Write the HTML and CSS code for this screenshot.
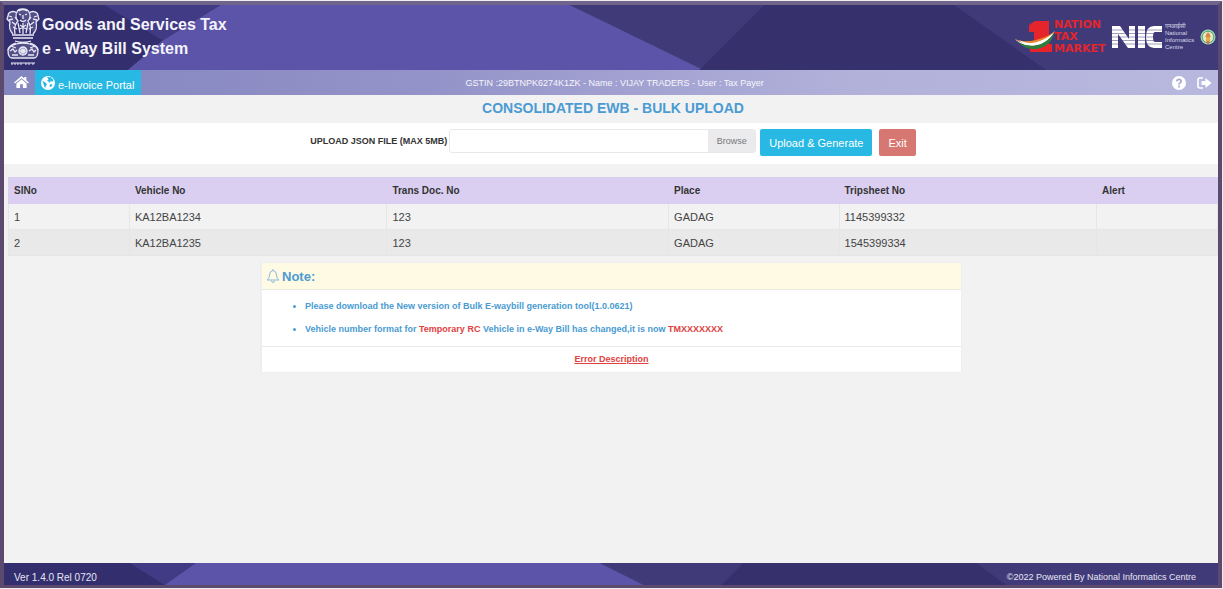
FILE: index.html
```html
<!DOCTYPE html>
<html lang="en">
<head>
  <meta charset="UTF-8" />
  <meta name="viewport" content="width=device-width, initial-scale=1.0" />
  <title>e-Way Bill System</title>
  <link rel="stylesheet" href="styles.css">
</head>
<body>
  <header class="header">
    <div class="brand">
      <svg class="emblem" viewBox="0 0 34 60" fill="#8f8cb8" fill-opacity=".35" stroke="#e9e7f5" stroke-width="1.3">
        <path d="M11 5c1-4 10-4 12 0 2 3 1 7-1 9 2 3 3 8 2 13M11 5c-2 3-1 7 1 9-3 3-4 8-3 13M13 7l2 1M19 8l2-1M17 8v4M14 13q3 3 6 0M13 4q4-3 8 0" />
        <path d="M11 6C7 3 2 5 2 9l-1 3 3 3c-1 4 0 9 3 12M3 9l3 1M3 13l4-1M23 6c4-3 9-1 9 3l1 3-3 3c1 4 0 9-3 12M31 9l-3 1M31 13l-4-1" />
        <path d="M12 16l2 10M22 16l-2 10M17 16v11M14 18l6 4M20 18l-6 4M6 15l4 3M28 15l-4 3M7 20l4 2M27 20l-4 2M9 10l2 3M25 10l-2 3" />
        <path d="M6 28h22M7 31h20M9 34q8 3 16 0M10 36q-7 2-8 7M24 36q7 2 8 7" />
        <path d="M2 43q0 8 4 8h22q4 0 4-8-2-5-8-6-7-2-14 0-6 1-8 6z" />
        <circle cx="17" cy="44" r="4" />
        <path d="M17 40v8M13 44h8M14 41l6 6M20 41l-6 6M4 44l3-2 2 3 2-2M23 44l3-2 2 3 2-2M6 48h6M22 48h6M5 39l5 2M29 39l-5 2" />
        <path d="M5 56h24M6 56v2M9 56v2M12 56v2M15 56v2M20 56v2M23 56v2M27 56v2" stroke-width="1" />
      </svg>
      <h1>Goods and Services Tax<br>e - Way Bill System</h1>
    </div>
    <div class="logos">
      <div class="market">
        <svg class="market-one" viewBox="0 0 44 34">
          <path d="M15 5l6-4h14v23h3v8H16v-8h4V12h-5z" fill="#e5242b" />
          <path d="M1 19q9 6 21 3 12-3 19-11-6 13-20 15-13 1-20-7z" fill="#fff" />
          <path d="M1 19q9 4 21 1 12-3 19-9-7 9-18 12-13 2-22-4z" fill="#ee8a2e" />
          <path d="M4 22q9 5 18 3 12-3 18-12-3 14-18 16-11 1-18-7z" fill="#2d7d3b" />
          <path d="M5 20q9 5 18 2 10-3 16-9-6 10-16 12-11 2-18-5z" fill="#fff" />
        </svg>
        <span>NATION<br>TAX<br>MARKET</span>
      </div>
      <svg class="nic" viewBox="0 0 50 24">
        <path d="M0 1h8l9 13V1h6v22h-7L6 9v14H0zM26 1h7v22h-7zM50 1v6h-7q-2 0-2 5t2 5h7v6h-8q-8 0-8-11t8-11z" fill="#fff" />
        <path d="M0 5h50M0 8.500h50M0 12h50M0 15.500h50M0 19h50" stroke="#403a78" stroke-width=".5" />
      </svg>
      <div class="nic-name"><span lang="hi">एनआईसी</span><br>National<br>Informatics<br>Centre</div>
      <svg class="badge" viewBox="0 0 16 16">
        <circle cx="8" cy="8" r="7.500" fill="#9ed8b4" />
        <circle cx="8" cy="8" r="5.800" fill="#e9e6c3" stroke="#4fa56f" />
        <path d="M6 13V6q0-2 2-2t2 2v7z" fill="#e4ab4c" />
        <path d="M5 8l3-5 3 5z" fill="#d98546" />
        <path d="M7 12h2v3H7z" fill="#ec6d58" />
      </svg>
    </div>
  </header>

  <nav class="navbar">
    <a class="home" href="#" aria-label="Home">
      <svg viewBox="0 0 16 14" width="15" height="13" fill="#fff">
        <path d="M8 0l3 2.600V1h2.200v3.500L16 7l-1 1.200L8 2.300 1 8.200 0 7z" />
        <path d="M8 3.500l5.500 4.700V13H9.500V9h-3v4h-4V8.200z" />
      </svg>
    </a>
    <a class="portal" href="#">
      <svg viewBox="0 0 14 14" width="14" height="14">
        <circle cx="7" cy="7" r="7" fill="#fff" />
        <path d="M6 1l4 .2L12.500 4l-1 1.500-1.800-.3L8 7 7.500 5.500 6 4.500l1.500-1zM1.500 5l3 1.500 1.500 2L4.800 10 4.500 12l-1-1zM9 8l2.500.500L10 11l-1.500-.5z" fill="#27b8e4" />
      </svg>
      <span>e-Invoice Portal</span>
    </a>
    <p class="user">GSTIN :29BTNPK6274K1ZK - Name : VIJAY TRADERS - User : Tax Payer</p>
    <div class="nav-icons">
      <a href="#" aria-label="Help">
        <svg viewBox="0 0 14 14" width="14" height="14">
          <circle cx="7" cy="7" r="7" fill="#fff" />
          <path d="M4.800 5.300Q5 3.300 7 3.300t2.200 1.800Q9.200 6.200 8 6.900T7 8.600M7 9.600v1.800" fill="none" stroke="#a9a9d6" stroke-width="1.700" />
        </svg>
      </a>
      <a href="#" aria-label="Logout">
        <svg viewBox="0 0 15 12" width="15" height="12">
          <path d="M6 1H3Q1 1 1 3v6q0 2 2 2h3" fill="none" stroke="#fff" stroke-width="1.600" />
          <path d="M4.500 4h4V1l6 5-6 5V8h-4z" fill="#fff" />
        </svg>
      </a>
    </div>
  </nav>

  <main>
    <h2 class="title">CONSOLIDATED EWB - BULK UPLOAD</h2>

    <form class="upload">
      <label for="file">UPLOAD JSON FILE (MAX 5MB)</label>
      <div class="picker">
        <input type="text" id="file" />
        <button type="button" class="browse">Browse</button>
      </div>
      <button type="button" class="btn btn-info">Upload &amp; Generate</button>
      <button type="button" class="btn btn-exit">Exit</button>
    </form>

    <table class="trips">
      <thead>
        <tr>
          <th class="c-sl">SlNo</th>
          <th class="c-vehicle">Vehicle No</th>
          <th class="c-doc">Trans Doc. No</th>
          <th class="c-place">Place</th>
          <th class="c-trip">Tripsheet No</th>
          <th>Alert</th>
        </tr>
      </thead>
      <tbody>
        <tr><td>1</td><td>KA12BA1234</td><td>123</td><td>GADAG</td><td>1145399332</td><td></td></tr>
        <tr><td>2</td><td>KA12BA1235</td><td>123</td><td>GADAG</td><td>1545399334</td><td></td></tr>
      </tbody>
    </table>

    <section class="note">
      <h3>
        <svg viewBox="0 0 14 14" width="14" height="14" fill="none" stroke="#8dbbdc">
          <path d="M7 1.500Q3.500 2 3.500 6T1 11h12q-2.500-1-2.500-5T7 1.500zM7 0v1.500M5.500 11.500q0 2 1.500 2t1.500-2" />
        </svg>
        Note:
      </h3>
      <ul>
        <li>Please download the New version of Bulk E-waybill generation tool(1.0.0621)</li>
        <li>Vehicle number format for <span>Temporary RC</span> Vehicle in e-Way Bill has changed,it is now <span>TMXXXXXXX</span></li>
      </ul>
      <p class="error"><a href="#">Error Description</a></p>
    </section>
  </main>

  <footer class="footer">
    <span>Ver 1.4.0 Rel 0720</span>
    <small>©2022 Powered By National Informatics Centre</small>
  </footer>
</body>
</html>
```
FILE: styles.css
```css
* {
  box-sizing: border-box;
}
html {
  background: #eeedf1;
}
body {
  margin: 1px 1px 1px 0;
  min-height: calc(100vh - 2px);
  display: flex;
  flex-direction: column;
  border: 4px solid #5b4a6e;
  border-top-color: #71648b;
  border-bottom-width: 3px;
  background: #f2f2f2;
  color: #444;
  font-family: "Liberation Sans", Arial, sans-serif;
  font-size: 11px;
}
h1, h2, h3, p, ul {
  margin: 0;
}
.header {
  display: flex;
  justify-content: space-between;
  align-items: center;
  height: 65px;
  padding: 0 2px 2px;
  background: #403b78 url("data:image/svg+xml,%3Csvg xmlns='http://www.w3.org/2000/svg' viewBox='0 0 1215 66' preserveAspectRatio='none'%3E%3Cpath d='M0 0h101l58 36-35 30H0z' fill='%23332f6f'/%3E%3Cpath d='M101 0h116l-58 36z' fill='%23413a85'/%3E%3Cpath d='M217 0h349l134 66H124l35-30z' fill='%235b54a8'/%3E%3Cpath d='M761 0h190l92 66H696z' fill='%2336316d'/%3E%3C/svg%3E") 0 0 / 100% 100%;
}
.brand {
  display: flex;
  align-items: center;
  gap: 2px;
}
.emblem {
  width: 34px;
  height: 60px;
}
.brand h1 {
  color: #f4f3fb;
  font-size: 16px;
  line-height: 24px;
}
.logos {
  display: flex;
  align-items: center;
}
.market {
  display: flex;
  align-items: center;
  margin-right: 4px;
  color: #e5242b;
  font: bold 11px/12px "DejaVu Sans", sans-serif;
}
.market-one {
  width: 44px;
  height: 34px;
  margin-right: -4px;
}
.market span {
  width: 54px;
}
.nic {
  width: 50px;
  height: 24px;
}
.nic-name {
  width: 35px;
  margin-left: 3px;
  color: #d8d6ea;
  font-size: 6px;
  line-height: 7px;
}
.badge {
  width: 16px;
  height: 16px;
}
.navbar {
  display: flex;
  align-items: stretch;
  height: 25px;
  background: linear-gradient(to right, #8385be, #9493c9 35%, #b1b1da 70%, #b8b8df);
}
.navbar a {
  display: flex;
  align-items: center;
  color: #fff;
  text-decoration: none;
}
.home {
  padding: 0 6px 0 10px;
}
.portal {
  gap: 3px;
  padding: 0 7px 0 6px;
  background: #27b8e4;
}
.portal span {
  padding-top: 4px;
}
.user {
  flex: 1;
  padding-left: 324px;
  color: #f6f6fc;
  font-size: 9px;
  line-height: 26px;
}
.nav-icons {
  display: flex;
  gap: 11px;
  padding-right: 6px;
}
main {
  flex: 1;
}
.title {
  height: 28px;
  padding-left: 4px;
  color: #4a9bd2;
  font-size: 14px;
  line-height: 26px;
  text-align: center;
}
.upload {
  display: flex;
  justify-content: center;
  align-items: flex-start;
  height: 41px;
  padding: 6px 0 0 4px;
  background: #fff;
}
.upload label {
  margin-right: 2px;
  color: #333;
  font-size: 9px;
  font-weight: bold;
  line-height: 25px;
}
.picker {
  display: flex;
  width: 307px;
  height: 24px;
  margin-right: 4px;
  border: 1px solid #e8e8e8;
  border-radius: 3px;
}
.picker input {
  flex: 1;
  min-width: 0;
  border: none;
  background: none;
}
.browse {
  width: 47px;
  border: none;
  background: #ebebee;
  color: #777;
  font: 9px "Liberation Sans", Arial, sans-serif;
}
.btn {
  height: 27px;
  padding: 0 9px;
  border: none;
  border-radius: 2px;
  color: #fff;
  font: 11px "Liberation Sans", Arial, sans-serif;
}
.btn-info {
  margin-right: 7px;
  background: #27b8e4;
}
.btn-exit {
  background: #d67871;
}
.trips {
  width: calc(100% - 4px);
  margin: 13px 0 6px 4px;
  border-collapse: collapse;
  table-layout: fixed;
}
.trips th,
.trips td {
  height: 26px;
  padding: 0 5px;
  border: 1px solid #e6e6e6;
  text-align: left;
}
.trips th {
  border-color: #dacff0;
  background: #dacff0;
  color: #333;
  font-size: 10px;
}
.trips tbody tr:nth-child(even) {
  background: #e9e9e9;
}
.c-sl {
  width: 10%;
}
.c-vehicle {
  width: 21.3%;
}
.c-doc {
  width: 23.3%;
}
.c-place {
  width: 14.1%;
}
.c-trip {
  width: 21.3%;
}
.note {
  width: 702px;
  max-width: 100%;
  margin: 0 auto;
  background: #fff;
  border: 1px solid #eee;
  border-left-width: 2px;
  color: #4a9bd2;
  font-size: 9px;
}
.note h3 {
  display: flex;
  align-items: center;
  gap: 2px;
  height: 27px;
  padding: 0 4px;
  border-bottom: 1px solid #e9e9e4;
  background: #fefae4;
  font-size: 13px;
}
.note ul {
  padding: 5px 43px;
  font-weight: bold;
  line-height: 23px;
}
.note li span,
.error a {
  color: #e04040;
}
.error {
  border-top: 1px solid #e9e9e9;
  font-weight: bold;
  line-height: 25px;
  text-align: center;
}
.footer {
  display: flex;
  justify-content: space-between;
  align-items: center;
  height: 22px;
  padding: 6px 22px 0 10px;
  background: #403b78 url("data:image/svg+xml,%3Csvg xmlns='http://www.w3.org/2000/svg' viewBox='0 0 1215 22' preserveAspectRatio='none'%3E%3Cpath d='M0 0h126l35 22H0z' fill='%23332f6f'/%3E%3Cpath d='M126 0h66l-31 22z' fill='%23413a85'/%3E%3Cpath d='M192 0h404l44 22H161z' fill='%235b54a8'/%3E%3Cpath d='M740 0h233l30 22H718z' fill='%2336316d'/%3E%3C/svg%3E") 0 0 / 100% 100%;
  color: #e8e6f4;
  font-size: 10px;
}
.footer small {
  font-size: 9px;
}
```
